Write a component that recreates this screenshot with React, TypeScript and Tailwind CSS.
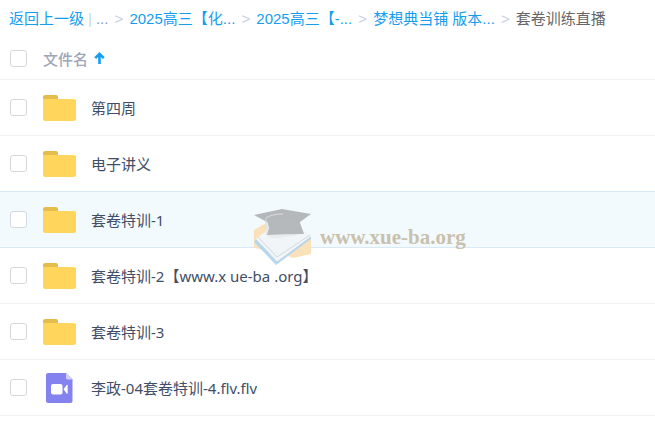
import { Fragment } from 'react';
import clsx from 'clsx';

type FileKind = 'folder' | 'video';

interface FileItem {
  id: number;
  name: string;
  kind: FileKind;
}

const CRUMBS = ['2025高三【化...', '2025高三【-...', '梦想典当铺 版本...'];

const FILES: FileItem[] = [
  { id: 1, name: '第四周', kind: 'folder' },
  { id: 2, name: '电子讲义', kind: 'folder' },
  { id: 3, name: '套卷特训-1', kind: 'folder' },
  { id: 4, name: '套卷特训-2【www.x ue-ba .org】', kind: 'folder' },
  { id: 5, name: '套卷特训-3', kind: 'folder' },
  { id: 6, name: '李政-04套卷特训-4.flv.flv', kind: 'video' },
];

const HOVERED_ID = 3;

function FolderIcon() {
  return (
    <svg width="33" height="26" viewBox="0 0 33 26" aria-hidden="true">
      <path d="M0 2a2 2 0 0 1 2-2H13a2 2 0 0 1 2 2V10H0Z" fill="#e6bd4c" />
      <path d="M0 4H31a2 2 0 0 1 2 2V24a2 2 0 0 1-2 2H2a2 2 0 0 1-2-2Z" fill="#ffd55c" />
    </svg>
  );
}

function VideoIcon() {
  return (
    <svg width="27" height="30" viewBox="0 0 27 30" aria-hidden="true">
      <path d="M2 0H20L26.5 6.5V28a2 2 0 0 1-2 2H2a2 2 0 0 1-2-2V2a2 2 0 0 1 2-2Z" fill="#8382ef" />
      <path d="M20 0L26.5 6.5H21.5a1.5 1.5 0 0 1-1.5-1.5Z" fill="#cfcffa" />
      <rect x="5" y="11" width="11.5" height="10.5" rx="2" fill="#fff" />
      <path d="M17.5 16.2L20.6 12Q21.7 11.1 21.7 12.5V20Q21.7 21.4 20.6 20.5Z" fill="#fff" />
    </svg>
  );
}

function SortArrow() {
  return (
    <svg width="11" height="13" viewBox="0 0 11 13" fill="none" aria-hidden="true">
      <path d="M5.5 12V2M1.2 6.2L5.5 1.9L9.8 6.2" stroke="#159df0" strokeWidth="2.6" />
    </svg>
  );
}

function Watermark() {
  return (
    <div className="pointer-events-none absolute left-[253px] top-[128px] flex items-center gap-2">
      <svg width="59" height="58" viewBox="0 0 59 58" aria-hidden="true">
        <path d="M1 22L13 15L46 22L58 28V46L40 50L24 44L1 40Z" fill="#f9e2ba" />
        <path d="M1 34L3 31L24 50L58 27V31L23 57Z" fill="#b5d9f2" />
        <path d="M3 31L14 22L50 22L58 27V29L24 54Z" fill="#f1f5f7" />
        <path d="M5 29L24 49L57 27" stroke="#cfdae1" strokeWidth="1" fill="none" />
        <path d="M3 32L24 54L58 29" stroke="#c3d0d9" strokeWidth="1" fill="none" />
        <path d="M12 12V25Q15 31 26 30L45 27" fill="#e9eced" />
        <path d="M14 12H46L51 26Q32 26 14 27L16 20Z" fill="#b5b9bb" />
        <path d="M1 7L29 1L58 6L47 14Q30 11 14 14Z" fill="#b4b8bb" />
        <path d="M30 6Q19 6 13 10V22" stroke="#d9dcde" strokeWidth="1" fill="none" />
      </svg>
      <span className="font-['Liberation_Serif',serif] text-[21px] leading-6 font-bold text-[#c9c1ad]">
        www.xue-ba.org
      </span>
    </div>
  );
}

function Checkbox({ label }: { label: string }) {
  return (
    <input
      type="checkbox"
      aria-label={label}
      className="size-[17px] shrink-0 appearance-none rounded-[3px] border border-[#d5d8de] bg-white checked:bg-[#159df0]"
    />
  );
}

function Separator() {
  return <span className="w-[21px] text-center text-[#c6d0e4]">&gt;</span>;
}

function FileRow({ file }: { file: FileItem }) {
  const isHovered = file.id === HOVERED_ID;
  // the hovered row shares its top line with the row before it
  const isBeforeHovered = file.id === HOVERED_ID - 1;

  return (
    <li
      className={clsx(
        'flex h-14 items-center border-b px-2.5',
        isHovered ? 'bg-[#f3fafe]' : 'hover:bg-[#f3fafe]',
        isHovered || isBeforeHovered ? 'border-[#d8e9f3]' : 'border-[#f1f2f6]'
      )}
    >
      <Checkbox label={file.name} />
      <span className="ml-4 flex w-[33px] shrink-0 justify-center">
        {file.kind === 'folder' ? <FolderIcon /> : <VideoIcon />}
      </span>
      <a href="#" className="ml-[15px] truncate text-[#424e67]">
        {file.name}
      </a>
    </li>
  );
}

export default function App() {
  return (
    <main className="min-h-screen bg-white font-['Noto_Sans','Noto_Sans_CJK_SC',sans-serif] text-[15px] leading-6">
      <nav className="flex h-[38px] items-center px-[9px] font-['Liberation_Sans','Noto_Sans_CJK_SC',sans-serif] whitespace-nowrap text-[#159df0]">
        <a href="#">返回上一级</a>
        <span className="mx-1 text-[#bfd9ee]">|</span>
        <span className="text-[#8a9bb0]">...</span>
        <Separator />
        {CRUMBS.map((crumb) => (
          <Fragment key={crumb}>
            <a href="#">{crumb}</a>
            <Separator />
          </Fragment>
        ))}
        <span className="text-[#666]">套卷训练直播</span>
      </nav>

      <header className="flex h-[42px] items-center border-b border-[#f1f2f6] px-2.5">
        <Checkbox label="全选" />
        <button type="button" className="ml-4 flex items-center gap-1.5 font-medium text-[#a0a6b8]">
          文件名
          <SortArrow />
        </button>
      </header>

      <div className="relative">
        <ul>
          {FILES.map((file) => (
            <FileRow key={file.id} file={file} />
          ))}
        </ul>
        <Watermark />
      </div>
    </main>
  );
}
